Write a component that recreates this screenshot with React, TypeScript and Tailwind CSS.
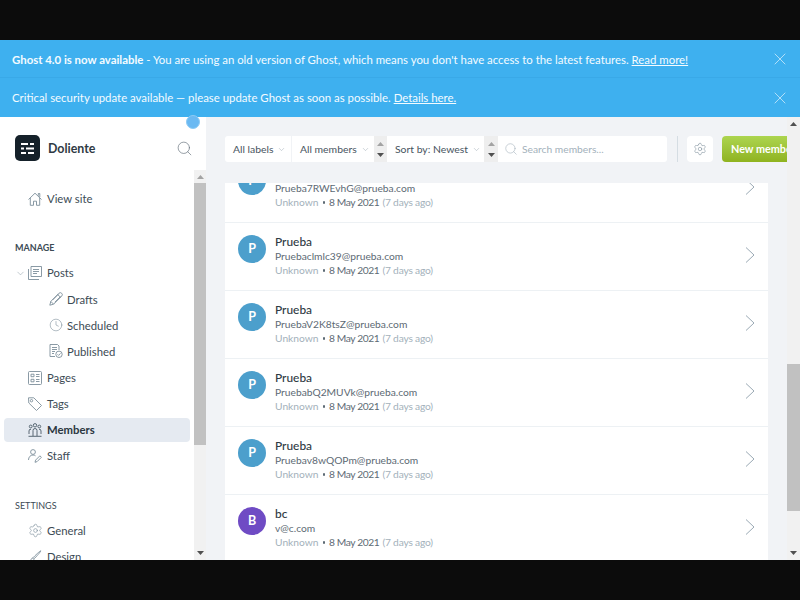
import React from "react";
import { ChevronDown, Clock, Search, Settings, X } from "lucide-react";

const Banner = ({ children, first }: { children: React.ReactNode; first?: boolean }) => (
  <div className={`shrink-0 flex items-center justify-between pl-3 pr-[10px] bg-[#3eb0ef] text-[#f4fbff] text-[11.400px] whitespace-nowrap ${first ? "h-[38px] border-b border-[#39a9e8]" : "h-[39px]"}`}>
    <div className={first ? "pt-[3px]" : "pt-[1px]"}>{children}</div>
    <X size={20} strokeWidth={0.9} className="text-[#d9effb]" />
  </div>
);

const ic = { fill: "none", stroke: "#7d8f9b", strokeWidth: 0.9 };
const HouseIcon = () => (
  <svg width="14" height="14" viewBox="0 0 14 14" {...ic}><path d="M.5 7.500L7 1.200l6.500 6.300" /><path d="M2.300 6v7.300h3.200V9.200h3v4.100h3.200V6" /><path d="M10.300 3.700V1.500h1.500v3.600" /></svg>
);
const Posts = () => (
  <svg width="14" height="14" viewBox="0 0 14 14" {...ic}><path d="M3 .5h10.500v10H3z" /><path d="M.5 3v10.500H11" /><path d="M5 3.500h6M5 5.500h6M5 7.500h4" /></svg>
);
const PencilIcon = () => (
  <svg width="14" height="14" viewBox="0 0 14 14" {...ic}><path d="M.8 13.200l1-3.800L9.900 1.300a1.800 1.800 0 012.800 2.800l-8.100 8.100z" /><path d="M1.800 9.400l2.800 2.800M8.700 2.500l2.800 2.800M3.600 8l5.800-5.800M5.800 10.200l5.800-5.800" /></svg>
);
const Published = () => (
  <svg width="14" height="14" viewBox="0 0 14 14" {...ic}><path d="M6 12.500H1V.5h7.500l1.500 1.500v4" /><path d="M3 3.500h5M3 5.500h5M3 7.500h3M3 9.500h2" /><circle cx="10" cy="10.300" r="3.200" /><path d="M8.500 10.300l1.100 1.100 1.900-2" /></svg>
);
const Pages = () => (
  <svg width="14" height="14" viewBox="0 0 14 14" {...ic}><rect x=".5" y=".5" width="13" height="13" rx="1" /><path d="M3 3.200h3v2.500H3zM3 8.300h3v2.500H3zM8 3.500h3.500M8 5.500h3.500M8 8.500h3.500M8 10.500h3.500" /></svg>
);
const TagIcon = () => (
  <svg width="14" height="14" viewBox="0 0 14 14" {...ic}><path d="M.5.8h5.300l7.700 7.700-5 5L.8 6z" /><circle cx="3.500" cy="3.700" r="1.200" /></svg>
);
const Members = () => (
  <svg width="14" height="14" viewBox="0 0 14 14" fill="none" stroke="#4a5a66" strokeWidth="0.9"><circle cx="7" cy="2.300" r="1.700" /><circle cx="2.700" cy="3.500" r="1.400" /><circle cx="11.300" cy="3.500" r="1.400" /><path d="M5 13V7.500a2 2 0 014 0V13M1 11V8a1.700 1.700 0 012-1.700M13 11V8a1.700 1.700 0 00-2-1.700M.5 13.300h13" /></svg>
);
const Staff = () => (
  <svg width="14" height="14" viewBox="0 0 14 14" {...ic}><circle cx="5" cy="3" r="2.400" /><path d="M.5 11c0-3 2-5 4.500-5 1 0 1.800.3 2.500.8" /><path d="M7 13.300l.6-2.200 4.300-4.300 1.500 1.500-4.300 4.300z" /></svg>
);
const Brush = () => (
  <svg width="14" height="14" viewBox="0 0 14 14" {...ic}><path d="M12.800.8c.4.4-5 6.500-6.800 8L5 7.800C6.600 6 12.400.4 12.800.8z" /><path d="M5 8c-2 0-2 2-2.500 3.300L1 13c2 .3 5-1 5-4" /></svg>
);
const Logo = () => (
  <div className="w-[25px] h-[26px] rounded-[5px] bg-[#15212a] flex items-center justify-center shrink-0">
    <svg width="13" height="11" viewBox="0 0 13 11" fill="white"><rect x="0" y="0" width="7" height="2" /><rect x="9" y="0" width="4" height="2" /><rect x="0" y="4.500" width="3" height="2" /><rect x="5" y="4.500" width="8" height="2" /><rect x="0" y="9" width="5" height="2" /><rect x="7" y="9" width="6" height="2" /></svg>
  </div>
);

const NavItem = ({ icon, label, sub, active, lead }: { icon: React.ReactNode; label: string; sub?: boolean; active?: boolean; lead?: React.ReactNode }) => (
  <div className={`relative h-[24px] mb-[2.140px] flex items-center rounded-[4px] ml-1 mr-1 ${sub ? "pl-[45px]" : "pl-[24px]"} ${active ? "bg-[#e5eaf1] font-bold text-[#2a3640]" : "text-[#3d4b55]"}`}>
    {lead}
    <span className={`flex shrink-0 items-center ${sub ? "w-[18px]" : "w-[19px]"}`}>{icon}</span>
    <span className={`text-[11.300px] ${sub ? "pt-[2px]" : "pt-[1px]"}`}>{label}</span>
  </div>
);

const SpinArrow = () => (
  <svg width="7" height="4" viewBox="0 0 7 4" fill="currentColor"><path d="M0 4L3.500 0 7 4z" /></svg>
);

const Spinner = ({ w }: { w: string }) => (
  <div className={`${w} h-[26px] bg-[#eeeeee] flex flex-col items-center justify-center gap-[7px] shrink-0`}>
    <span className="text-[#a3a3a3] flex"><SpinArrow /></span>
    <span className="text-[#505050] flex rotate-180"><SpinArrow /></span>
  </div>
);

const Select = ({ label, w, border }: { label: string; w: string; border?: boolean }) => (
  <div className={`h-[26px] bg-white flex items-center pl-2 gap-[4px] text-[10.400px] whitespace-nowrap text-[#47545e] shrink-0 ${w} ${border ? "border-r border-[#f1f3f6] rounded-l-[3px]" : ""}`}>
    <span className="pt-[2px]">{label}</span>
    <ChevronDown size={9} strokeWidth={1} className="text-[#7d8f9b] mt-[1px]" />
  </div>
);

const rows = [
  { name: "Prueba", email: "Prueba7RWEvhG@prueba.com", c: "bg-[#4c9fcc]", l: "P" },
  { name: "Prueba", email: "Pruebaclmlc39@prueba.com", c: "bg-[#4c9fcc]", l: "P" },
  { name: "Prueba", email: "PruebaV2K8tsZ@prueba.com", c: "bg-[#4c9fcc]", l: "P" },
  { name: "Prueba", email: "PruebabQ2MUVk@prueba.com", c: "bg-[#4c9fcc]", l: "P" },
  { name: "Prueba", email: "Pruebav8wQOPm@prueba.com", c: "bg-[#4c9fcc]", l: "P" },
  { name: "bc", email: "v@c.com", c: "bg-[#6f4bc4]", l: "B" },
];

const Row = ({ r }: { r: (typeof rows)[number] }) => (
  <div className="h-[68px] shrink-0 flex items-start pl-[13px] pr-[13px] border-b border-[#edf1f4]">
    <div className={`w-[28px] h-[28px] mt-[12px] rounded-full ${r.c} text-white font-bold text-[12.500px] flex items-center justify-center shrink-0`}>{r.l}</div>
    <div className="ml-[9px] flex-1 pt-[12px]">
      <div className="text-[11.900px] leading-[14px] text-[#2f3a43] font-medium">{r.name}</div>
      <div className="text-[10.250px] leading-[14px] text-[#5d6a74]">{r.email}</div>
      <div className="text-[10.250px] leading-[15px] text-[#5d6a74] flex items-center">
        <span className="text-[#a3b1bb]">Unknown</span>
        <span className="w-[2.500px] h-[2.500px] rounded-full bg-[#5d6a74] mx-[4px]" />
        <span className="tracking-[-0.4px]">8 May 2021</span>
        <span className="text-[#a3b1bb] ml-[3px] tracking-[-0.2px]">(7 days ago)</span>
      </div>
    </div>
    <svg className="mt-[24px] shrink-0" width="10" height="16" viewBox="0 0 10 16" fill="none" stroke="#9aa9b4" strokeWidth="1"><path d="M1 .5L9 8l-8 7.500" /></svg>
  </div>
);

export default function App() {
  return (
    <div className="w-[800px] h-[600px] flex flex-col overflow-hidden bg-[#0c0c0c]" style={{ fontFamily: '"Lato", sans-serif' }}>
      <div className="h-[40px] shrink-0" />
      <Banner first>
        <b>Ghost 4.0 is now available</b> - You are using an old version of Ghost, which means you don't have access to the latest features. <u>Read more!</u>
      </Banner>
      <Banner>
        Critical security update available — please update Ghost as soon as possible. <u>Details here.</u>
      </Banner>
      <div className="h-[443px] shrink-0 flex relative">
        <div className="absolute left-[186px] top-[-2px] w-[14px] h-[14px] rounded-full bg-[#6ab9f2] border border-[#8ecbf5] z-10" />
        <aside className="w-[206px] shrink-0 bg-white flex flex-col">
          <div className="h-[53px] shrink-0 flex items-center pt-[9px] pl-[15px] pr-[13px]">
            <Logo />
            <span className="ml-[8px] pt-[2px] flex-1 text-[12.400px] font-bold text-[#2f3a43]">Doliente</span>
            <Search size={17} strokeWidth={0.9} className="text-[#5d6a74]" />
          </div>
          <div className="flex-1 flex min-h-0">
            <nav className="flex-1 overflow-hidden pt-[17px]">
              <NavItem icon={<HouseIcon />} label="View site" />
              <div className="pl-[15px] mt-[29px] mb-[5px] h-[16px] text-[9px] font-bold text-[#3d4b55] flex items-center">MANAGE</div>
              <NavItem
                icon={<Posts />}
                label="Posts"
                lead={<ChevronDown size={11} strokeWidth={1} className="absolute left-[11px] text-[#7d8f9b]" />}
              />
              <NavItem sub icon={<PencilIcon />} label="Drafts" />
              <NavItem sub icon={<Clock size={14} strokeWidth={1} className="text-[#7d8f9b]" />} label="Scheduled" />
              <NavItem sub icon={<Published />} label="Published" />
              <NavItem icon={<Pages />} label="Pages" />
              <NavItem icon={<TagIcon />} label="Tags" />
              <NavItem active icon={<Members />} label="Members" />
              <NavItem icon={<Staff />} label="Staff" />
              <div className="pl-[15px] mt-[30px] mb-[5px] h-[16px] text-[9px] text-[#3d4b55] flex items-center">SETTINGS</div>
              <NavItem icon={<Settings size={15} strokeWidth={1} className="text-[#7d8f9b]" />} label="General" />
              <NavItem icon={<Brush />} label="Design" />
            </nav>
            <div className="w-[12px] shrink-0 bg-[#f1f1f1] flex flex-col items-center">
              <div className="h-[13px] flex items-center text-[#a3a3a3]"><SpinArrow /></div>
              <div className="w-full h-[262px] bg-[#c1c1c1]" />
              <div className="mt-auto h-[13px] flex items-center text-[#505050] rotate-180"><SpinArrow /></div>
            </div>
          </div>
        </aside>
        <main className="flex-1 bg-[#f1f3f6] flex min-w-0">
          <div className="flex-1 min-w-0 flex flex-col overflow-hidden">
            <div className="h-[66px] shrink-0 pt-[19px] pl-[19px] flex items-start overflow-hidden">
              <Select label="All labels" w="w-[67px]" border />
              <Select label="All members" w="w-[82px]" />
              <Spinner w="w-[13px]" />
              <Select label="Sort by: Newest" w="w-[97px]" />
              <Spinner w="w-[14px]" />
              <div className="w-[169px] h-[26px] bg-white flex items-center pl-[6px] gap-[4px] text-[10.250px] text-[#a3b1bb] shrink-0 rounded-r-[3px] whitespace-nowrap">
                <Search size={14} strokeWidth={1} className="text-[#a3b1bb]" />
                <span className="pt-[2px]">Search members...</span>
              </div>
              <div className="w-px h-[26px] bg-[#d5dde3] ml-[10px] shrink-0" />
              <div className="w-[26px] h-[26px] ml-[9px] bg-white rounded-[4px] flex items-center justify-center shrink-0">
                <Settings size={14} strokeWidth={1} className="text-[#7d8f9b]" />
              </div>
              <div className="w-[65px] h-[26px] ml-[9px] rounded-l-[4px] bg-gradient-to-b from-[#add54f] to-[#8fb31f] text-white font-bold text-[10.800px] flex items-center pl-[9px] shrink-0 whitespace-nowrap overflow-hidden">
                New member
              </div>
            </div>
            <div className="flex-1 min-h-0 overflow-hidden pl-[19px] pr-[19px]">
              <div className="bg-white -mt-[28px] flex flex-col">
                {rows.map((r) => <Row key={r.email} r={r} />)}
              </div>
            </div>
          </div>
          <div className="w-[13px] shrink-0 bg-[#f1f1f1] flex flex-col items-center">
            <div className="h-[13px] flex items-center text-[#505050]"><SpinArrow /></div>
            <div className="w-full h-[147px] mt-[234px] bg-[#c1c1c1]" />
            <div className="mt-auto h-[13px] flex items-center text-[#505050] rotate-180"><SpinArrow /></div>
          </div>
        </main>
      </div>
      <div className="h-[40px] shrink-0" />
    </div>
  );
}
